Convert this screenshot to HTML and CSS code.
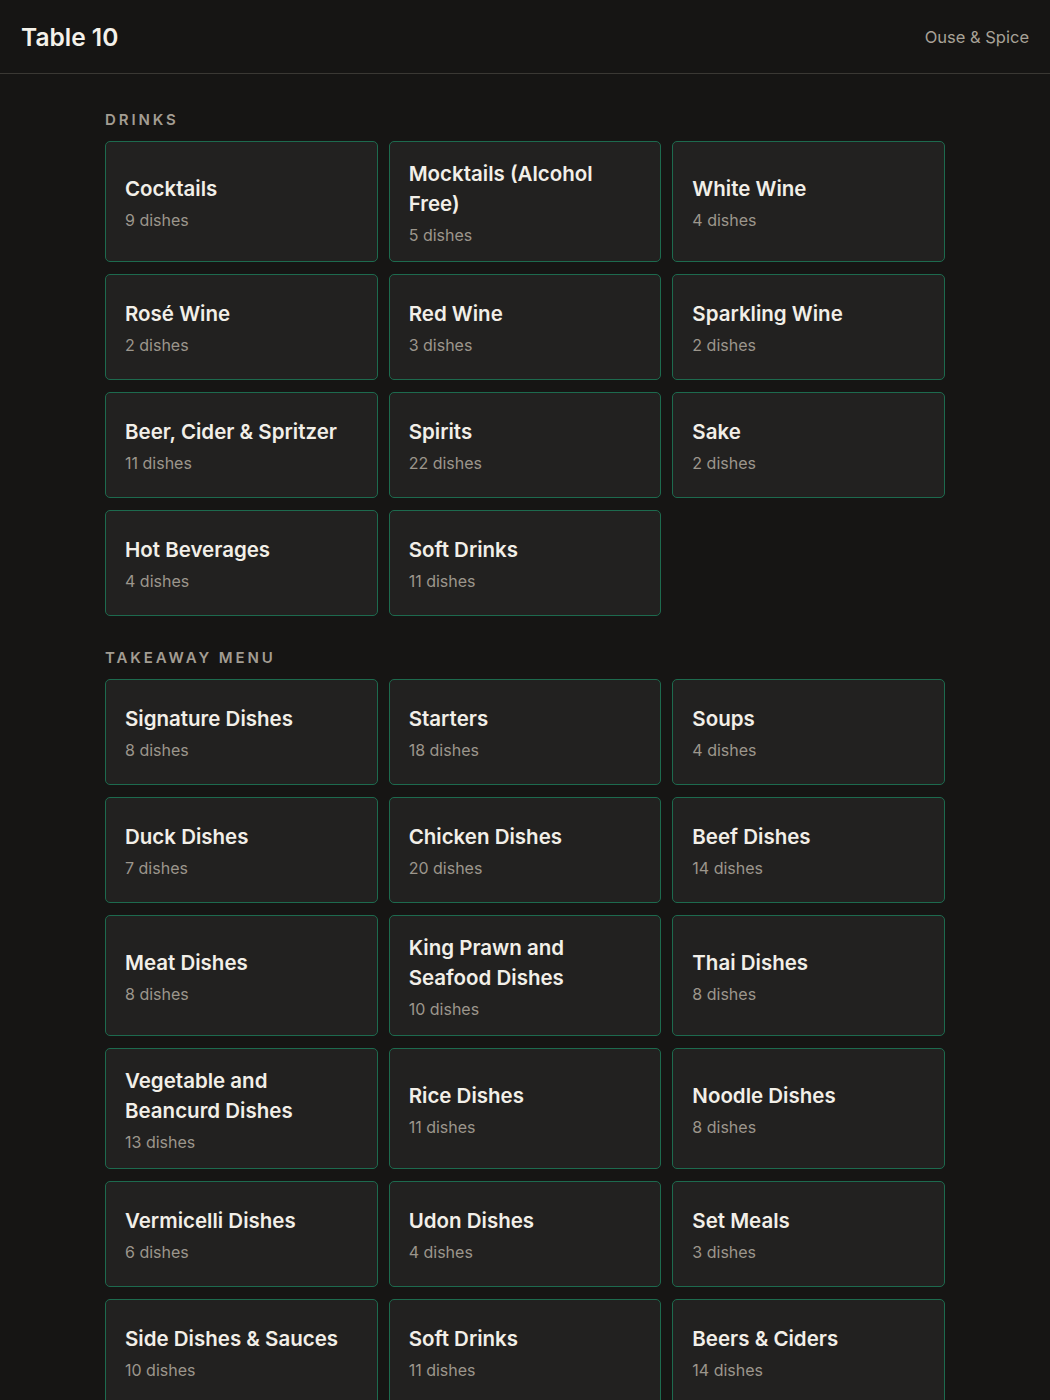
FILE: index.html
```html
<!DOCTYPE html>
<html>
<head>
<meta http-equiv="Content-Type" content="text/html;charset=UTF-8">
<link rel="stylesheet" href="styles.css">
</head>
<body>
<div class="topBar">
  <span class="tableName">Table 10</span>
  <span class="shopName">Ouse &amp; Spice</span>
</div>
<div class="menuWrapper">
  <div class="menuSection">
    <div class="sectionTitle">DRINKS</div>
    <div class="categoryGrid">
      <div class="category"><div class="categoryName">Cocktails</div><div class="categoryCount">9 dishes</div></div>
      <div class="category"><div class="categoryName">Mocktails (Alcohol Free)</div><div class="categoryCount">5 dishes</div></div>
      <div class="category"><div class="categoryName">White Wine</div><div class="categoryCount">4 dishes</div></div>
      <div class="category"><div class="categoryName">Rosé Wine</div><div class="categoryCount">2 dishes</div></div>
      <div class="category"><div class="categoryName">Red Wine</div><div class="categoryCount">3 dishes</div></div>
      <div class="category"><div class="categoryName">Sparkling Wine</div><div class="categoryCount">2 dishes</div></div>
      <div class="category"><div class="categoryName">Beer, Cider &amp; Spritzer</div><div class="categoryCount">11 dishes</div></div>
      <div class="category"><div class="categoryName">Spirits</div><div class="categoryCount">22 dishes</div></div>
      <div class="category"><div class="categoryName">Sake</div><div class="categoryCount">2 dishes</div></div>
      <div class="category"><div class="categoryName">Hot Beverages</div><div class="categoryCount">4 dishes</div></div>
      <div class="category"><div class="categoryName">Soft Drinks</div><div class="categoryCount">11 dishes</div></div>
    </div>
  </div>
  <div class="menuSection">
    <div class="sectionTitle">TAKEAWAY MENU</div>
    <div class="categoryGrid">
      <div class="category"><div class="categoryName">Signature Dishes</div><div class="categoryCount">8 dishes</div></div>
      <div class="category"><div class="categoryName">Starters</div><div class="categoryCount">18 dishes</div></div>
      <div class="category"><div class="categoryName">Soups</div><div class="categoryCount">4 dishes</div></div>
      <div class="category"><div class="categoryName">Duck Dishes</div><div class="categoryCount">7 dishes</div></div>
      <div class="category"><div class="categoryName">Chicken Dishes</div><div class="categoryCount">20 dishes</div></div>
      <div class="category"><div class="categoryName">Beef Dishes</div><div class="categoryCount">14 dishes</div></div>
      <div class="category"><div class="categoryName">Meat Dishes</div><div class="categoryCount">8 dishes</div></div>
      <div class="category"><div class="categoryName">King Prawn and Seafood Dishes</div><div class="categoryCount">10 dishes</div></div>
      <div class="category"><div class="categoryName">Thai Dishes</div><div class="categoryCount">8 dishes</div></div>
      <div class="category"><div class="categoryName">Vegetable and Beancurd Dishes</div><div class="categoryCount">13 dishes</div></div>
      <div class="category"><div class="categoryName">Rice Dishes</div><div class="categoryCount">11 dishes</div></div>
      <div class="category"><div class="categoryName">Noodle Dishes</div><div class="categoryCount">8 dishes</div></div>
      <div class="category"><div class="categoryName">Vermicelli Dishes</div><div class="categoryCount">6 dishes</div></div>
      <div class="category"><div class="categoryName">Udon Dishes</div><div class="categoryCount">4 dishes</div></div>
      <div class="category"><div class="categoryName">Set Meals</div><div class="categoryCount">3 dishes</div></div>
      <div class="category"><div class="categoryName">Side Dishes &amp; Sauces</div><div class="categoryCount">10 dishes</div></div>
      <div class="category"><div class="categoryName">Soft Drinks</div><div class="categoryCount">11 dishes</div></div>
      <div class="category"><div class="categoryName">Beers &amp; Ciders</div><div class="categoryCount">14 dishes</div></div>
    </div>
  </div>
</div>
</body>
</html>
```
FILE: styles.css
```css
body{
  margin: 0;
  background-color: #161514;
  font-family: Inter, "Noto Sans", sans-serif;
  color: #f0ede6;
}
.topBar{
  height: 73px;
  padding: 0 21px;
  display: flex;
  align-items: center;
  justify-content: space-between;
  border-bottom: 1px solid #3a3834;
}
.tableName{
  font-size: 24.5px;
  font-weight: 600;
  color: #f4f1ea;
}
.shopName{
  font-size: 16.5px;
  color: #a8a298;
}
.menuWrapper{
  width: 840px;
  margin: 0 auto;
  padding-top: 37px;
}
.menuSection{
  margin-bottom: 33px;
}
.sectionTitle{
  font-size: 15px;
  line-height: 18px;
  font-weight: 600;
  letter-spacing: 2.9px;
  color: #a39d93;
  margin-bottom: 12px;
}
.categoryGrid{
  display: grid;
  grid-template-columns: repeat(3, 1fr);
  gap: 12px 11px;
}
.category{
  min-height: 106px;
  box-sizing: border-box;
  padding: 15.5px 19px;
  display: flex;
  flex-direction: column;
  justify-content: center;
  background-color: #222120;
  border: 1px solid #1d6a4e;
  border-radius: 5px;
}
.categoryName{
  margin-top: 1px;
  font-size: 20.5px;
  line-height: 30px;
  font-weight: 600;
  color: #f2efe8;
}
.categoryCount{
  margin-top: 5px;
  font-size: 16px;
  line-height: 22px;
  color: #9c968c;
}
```
